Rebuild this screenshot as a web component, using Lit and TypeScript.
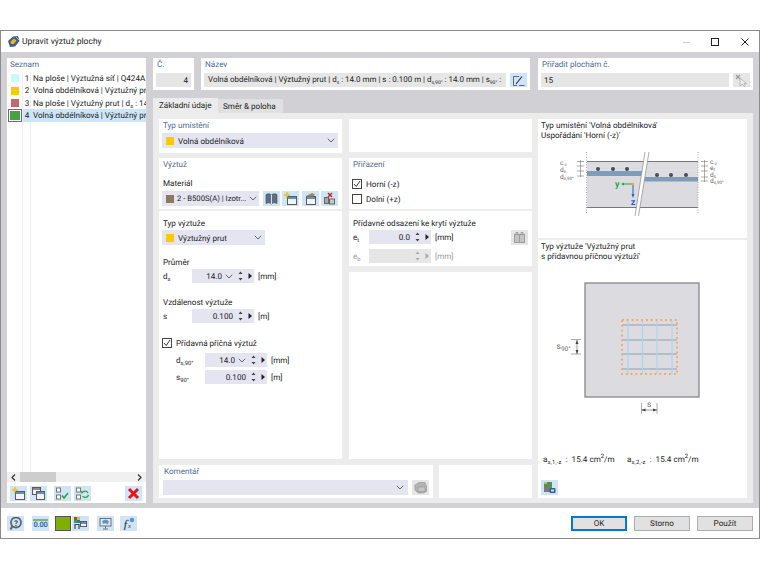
import { LitElement, html, css, svg } from "lit";
import { customElement } from "lit/decorators.js";

const chev = html`<svg class="chev" width="8" height="5" viewBox="0 0 8 5"><path d="M.8.8 4 4 7.2.8" fill="none" stroke="#666" stroke-width="1"/></svg>`;
const spin = html`<svg class="spin" width="5" height="10" viewBox="0 0 5 10"><path d="M2.5.5 4.5 3H.5zM2.5 9.5.5 7h4z" fill="#444"/></svg>`;
const tri = html`<svg class="tri" width="4" height="6" viewBox="0 0 4 6"><path d="M.5 0 4 3 .5 6z" fill="#222"/></svg>`;

const ic = (body: unknown) => html`<svg width="13" height="13" viewBox="0 0 13 13">${body}</svg>`;
const win = (x: number, y: number, w: number, h: number, top = "#5b93c9") => svg`<rect x="${x + .5}" y="${y + .5}" width="${w}" height="${h}" fill="#f4f4f4" stroke="#5a5a5a"/><rect x="${x + 1}" y="${y + 1}" width="${w - 1}" height="2" fill="${top}"/>`;
const star = svg`<path d="M3 0 3.8 2.2 6 3 3.8 3.8 3 6 2.2 3.8 0 3 2.2 2.2z" fill="#f5d000" stroke="#d8a800" stroke-width=".4"/>`;
const icons = {
  add: ic(svg`${win(3, 4, 9, 8)}${star}`),
  copy: ic(svg`${win(0, 0, 8, 7, "#8a8a8a")}${win(4, 4, 8, 8)}`),
  checks: ic(svg`<rect x=".5" y="1" width="4" height="4" fill="#fff" stroke="#777"/><rect x=".5" y="8" width="4" height="4" fill="#fff" stroke="#777"/><path d="M6 8.500 8 11 12 6" fill="none" stroke="#2da52d" stroke-width="1.600"/>`),
  swap: ic(svg`<rect x=".5" y="1" width="4" height="4" fill="#fff" stroke="#777"/><rect x=".5" y="8" width="4" height="4" fill="#fff" stroke="#777"/><path d="M6 6a3.4 3.4 0 0 1 6 0M12.5 8a3.4 3.4 0 0 1-6 1" fill="none" stroke="#2da52d" stroke-width="1.2"/><path d="M5 3.8 7.5 5 5.500 7z" fill="#2da52d"/>`),
  del: ic(svg`<path d="M2 2 11 11M11 2 2 11" stroke="#e5141a" stroke-width="3"/>`),
  book: ic(svg`<path d="M1 2.500C3 1.500 5 1.500 6.500 3 8 1.500 10 1.500 12 2.500V11.500C10 10.500 8 10.500 6.500 12 5 10.500 3 10.500 1 11.500z" fill="#5f6f80" stroke="#3f4a55" stroke-width=".6"/><path d="M6.500 3V12" stroke="#cfe5f7"/>`),
  edit: ic(svg`${win(2, 4, 9, 8)}<path d="M3 3.500 8 1l3 1.500-2 2H3z" fill="#a9825a"/>`),
  delMulti: ic(svg`<rect x="1.500" y="5.500" width="4" height="6" fill="#a8a8a8" stroke="#666"/><rect x="6.500" y="7" width="5" height="5" fill="#c8c8c8" stroke="#666"/><path d="M5 1 9 5M9 1 5 5" stroke="#e5141a" stroke-width="1.400"/>`),
  pen: ic(svg`<path d="M1.500 2.500H7M1.500 2.500V11.500H5" fill="none" stroke="#5b6a78"/><path d="M4 10 10 2.500" stroke="#334" stroke-width="1.200"/><path d="M7 11.500H12.500" stroke="#5b6a78"/>`),
  cursor: ic(svg`<path d="M1 1 5 5M5 1 1 5" stroke="#9a9a9a" stroke-width="1.200"/><path d="M5 4V12L7.200 10 9 12.500 10.300 11.700 9 9.500H11.500z" fill="#eee" stroke="#a5a5a5" stroke-width=".7"/>`),
  layers: ic(svg`<path d="M1 4 5 1.500H11L12.500 5V10.500L9 12H4L1 9z" fill="#b4b4b4" stroke="#9a9a9a" stroke-width=".7"/><path d="M4 6H11V10.500H4z" fill="#c6c6c6" stroke="#989898" stroke-width=".7"/>`),
  copy2: ic(svg`<rect x="1.500" y="3.500" width="5" height="8" fill="#c4c4c4" stroke="#9c9c9c"/><rect x="6.500" y="3.500" width="5" height="8" fill="#c4c4c4" stroke="#9c9c9c"/><path d="M3 3V1.500H5V3M8 3V1.500H10V3" fill="none" stroke="#9c9c9c"/>`),
  render: ic(svg`<rect x="1" y="1" width="8" height="6" fill="#5f8f50"/><rect x="1" y="1" width="3" height="2" fill="#b5c85a"/><rect x="1" y="6" width="7" height="5" fill="#7a7a7a"/><rect x="6.500" y="7" width="6" height="5" rx="1" fill="#2f5fa5"/><rect x="8" y="8.500" width="3" height="2" fill="#cfe5f7"/>`),
  help: ic(svg`<circle cx="7" cy="5.500" r="5" fill="none" stroke="#5d6670" stroke-width="1.800"/><path d="M3.500 9 1.500 12.500" stroke="#5d6670" stroke-width="2"/><text x="7" y="8.500" text-anchor="middle" font-size="8" font-weight="700" fill="#444c55">?</text>`),
  colors: ic(svg`<rect x="0" y="0" width="3" height="3" fill="#d8342c"/><rect x="3" y="0" width="3" height="3" fill="#f0c000"/><rect x="0" y="3" width="3" height="3" fill="#2fa540"/><rect x="3" y="3" width="3" height="3" fill="#2f6fc5"/><path d="M1 12V7.500H5V12" fill="none" stroke="#444" stroke-width="1.200"/>${win(6, 4, 6, 5)}`),
  monitor: ic(svg`<rect x="1" y="1.500" width="11" height="7.500" fill="#dfe5ea" stroke="#6a7480"/><path d="M3 4.500C5 2 8 2 10 4.500L8.500 7.500 6.500 6 4.500 7z" fill="#5f93c4"/><path d="M6.500 9V11.500M4 12H9" stroke="#6a7480"/>`),
  fx: ic(svg`<text x="1.500" y="11.500" font-size="13" font-style="italic" font-family="Liberation Serif" fill="#333">f</text><text x="6" y="10.500" font-size="6.500" font-style="italic" font-family="Liberation Serif" fill="#333">x</text><circle cx="10" cy="3" r="2.300" fill="#5f93c4"/>`),
  logo: html`<svg width="13" height="13" viewBox="0 0 13 13"><path d="M1 6 6 1.500 11 1 12.500 6 8 11.500 3 12z" fill="#3f5f85"/><path d="M3.500 6.500 7 3.500 9.500 5.500 7 9 4 9z" fill="#e8b820"/><path d="M9 2 12 5" stroke="#9fb8d0"/></svg>`,
};

const btn = (icon: unknown, extra = "") => html`<span class="ib ${extra}">${icon}</span>`;
const sw = (c: string) => html`<span class="sw" style="background:${c}"></span>`;
const ds = html`d<sub>s</sub>`;
const ds90 = html`d<sub>s,90°</sub>`;
const s90 = html`s<sub>90°</sub>`;

const num = (value: string, opts: { chev?: boolean; off?: boolean } = {}) => html`
  <span class="num ${opts.off ? "off" : ""}"><span class="val">${value}</span>${opts.chev ? chev : ""}${spin}${tri}</span>`;

const topDiagram = svg`
<svg class="dg" width="209" height="97" viewBox="538 141 209 97">
  <rect x="587" y="161" width="111" height="47" fill="#dcdce0"/>
  <path d="M587 161.500H698M587 207.500H698" stroke="#77777f" stroke-width="1.200"/>
  <path d="M587 166H640M587 170H640M646 166H698M646 170H698" stroke="#e8e8ea" stroke-width=".6"/>
  <rect x="587" y="171" width="56" height="5" fill="#7f9db8"/>
  <rect x="644" y="177" width="54" height="4.500" fill="#7f9db8"/>
  <path d="M645 152 635 216H638.500L649 152z" fill="#fff"/>
  <path d="M645 152 635 216M649 152 638.500 216" stroke="#8a8a90" stroke-width=".7"/>
  ${[598, 613, 627].map((x) => svg`<circle cx="${x}" cy="169" r="2" fill="#4a4a5a"/>`)}
  ${[657, 671, 686].map((x) => svg`<circle cx="${x}" cy="175" r="2" fill="#4a4a5a"/>`)}
  <path d="M586.500 152V213M698 152V213" stroke="#8a8a8a" stroke-width=".7" stroke-dasharray="1 1.500"/>
  <path d="M633 184H623" stroke="#1ea34a" stroke-width="1"/><path d="M621 184 624 182.500V185.500z" fill="#1ea34a"/>
  <path d="M633 184V195" stroke="#2a5fc5" stroke-width="1"/><path d="M633 198 631.500 194H634.500z" fill="#2a5fc5"/>
  <circle cx="633" cy="184" r="1.300" fill="#f0b400"/>
  <text x="615" y="187" class="ax" fill="#1ea34a">y</text>
  <text x="633" y="205" class="ax" fill="#2a5fc5" text-anchor="middle">z</text>
  <path d="M577 161.500H584M577 166H584M577 171H584M577 176H584M580.500 160V177" stroke="#777" stroke-width=".6"/>
  <path d="M701 161.500H708M701 166H708M701 171H708M701 177H708M701 181H708M704.500 160V182" stroke="#777" stroke-width=".6"/>
  <text x="560" y="165" class="dl">c<tspan dy="1" font-size="4.500">-z</tspan></text>
  <text x="560" y="172" class="dl">d<tspan dy="1" font-size="4.500">s</tspan></text>
  <text x="560" y="179" class="dl">d<tspan dy="1" font-size="4.500">s,90°</tspan></text>
  <text x="710" y="164" class="dl">c<tspan dy="1" font-size="4.500">-z</tspan></text>
  <text x="710" y="170" class="dl">e<tspan dy="1" font-size="4.500">t</tspan></text>
  <text x="710" y="176.500" class="dl">d<tspan dy="1" font-size="4.500">s</tspan></text>
  <text x="710" y="183" class="dl">d<tspan dy="1" font-size="4.500">s,90°</tspan></text>
</svg>`;

const bottomDiagram = svg`
<svg class="dg" width="209" height="153" viewBox="538 262 209 153">
  <rect x="585" y="283" width="114" height="114" fill="#dcdce0" stroke="#85858f" stroke-width="1.300"/>
  ${[325, 340, 354, 369].map((y) => svg`<path d="M622 ${y}H677" stroke="#8e9dae" stroke-width="1.200"/>`)}
  ${[628, 642.5, 657, 672].map((x) => svg`<path d="M${x} 321V374" stroke="#aed3f0" stroke-width="1.200"/>`)}
  <rect x="622" y="320" width="55" height="54" fill="none" stroke="#f0a868" stroke-width="1.800" stroke-dasharray="1.800 3"/>
  <path d="M571 339.500H581M571 354H581" stroke="#777" stroke-width=".6"/>
  <path d="M577 340V354" stroke="#555" stroke-width=".6"/>
  <path d="M577 340 575.500 344H578.500zM577 354 575.500 350H578.500z" fill="#444"/>
  <text x="556.500" y="349" class="sl">s<tspan dy="1.500" font-size="6.500">90°</tspan></text>
  <path d="M641.500 403V414M657 403V414" stroke="#777" stroke-width=".6"/>
  <path d="M641.500 410H657" stroke="#555" stroke-width=".6"/>
  <path d="M641.500 410 645.500 408.500V411.500zM657 410 653 408.500V411.500z" fill="#444"/>
  <text x="649.300" y="407" class="sl" text-anchor="middle">s</text>
</svg>`;

@customElement("app-root")
export class AppRoot extends LitElement {
  static styles = css`
    :host { display: block; width: 760px; height: 570px; background: #fff; overflow: hidden;
      font-family: Roboto, "Noto Sans", sans-serif; font-size: 8.1px; color: #222; line-height: 14px; text-rendering: geometricPrecision; }
    * { box-sizing: border-box; }
    sub { font-size: 5.8px; line-height: 0; vertical-align: -1.5px; }
    .window { margin-top: 30px; height: 509px; border: 1px solid #8c8c8c; display: flex; flex-direction: column; background: #fff; }
    .titlebar { height: 21px; display: flex; align-items: center; padding: 0 6px; gap: 2px; }
    .titlebar .t { flex: 1; font-size: 8.5px; }
    .wb { display: flex; align-items: center; }
    .wb svg { display: block; }
    .main { height: 456px; background: #d1d1d5; padding: 6px 6px 5px; display: flex; gap: 7px; }
    .left { width: 139px; background: #fff; display: flex; flex-direction: column; }
    .title { color: #4b6a9b; height: 14px; line-height: 13px; padding-left: 1px; flex: none; }
    .left .title { padding-left: 3px; }
    .list { flex: 1; overflow: hidden; padding-top: 0;
      background: linear-gradient(#eee,#eee) 15px 0/1px 100% no-repeat, linear-gradient(#eee,#eee) 23px 0/1px 100% no-repeat; }
    .row { height: 12.4px; line-height: 12.4px; display: flex; align-items: center; white-space: nowrap; overflow: hidden; }
    .row .sb { width: 16px; flex: none; display: flex; justify-content: center; padding-right: 1px; }
    .row .n { width: 8px; flex: none; text-align: center; }
    .row .tx { padding-left: 2px; flex: none; }
    .row.sel .n, .row.sel .tx { background: #cde6f7; height: 12.4px; }
    .row.sel .tx { flex: 1; }
    .row.sel .sb .sw { outline: 1px solid #fff; box-shadow: 0 0 0 2px #5b7080; width: 10px; height: 9px; }
    .sw { display: block; width: 8px; height: 8px; flex: none; }
    .hscroll { height: 10px; background: #f0f0f0; flex: none; display: flex; align-items: center; justify-content: space-between; padding: 0 4px; position: relative; }
    .thumb { width: 36px; height: 10px; background: #cdcdcd; margin-left: 4px; margin-right: auto; }
    .hscroll svg { display: block; }
    .ltools { height: 21px; flex: none; display: flex; padding: 4px 4px 2px 3px; }
    .ib { width: 17px; height: 15px; background: #cfe5f7; display: inline-flex; align-items: center; justify-content: center; flex: none; }
    .ib svg { display: block; }
    .ib.gray { background: #e6e6e6; }
    .ltools .ib + .ib { margin-left: 3px; }
    .ltools .ib.g { margin-left: 7px; }
    .ltools .ib.r { margin-left: auto; }
    .right { width: 600px; display: flex; flex-direction: column; }
    .head { display: flex; height: 32px; flex: none; }
    .card { background: #fff; padding: 0 3px; }
    .card .title { padding-left: 1px; }
    .head .c1 { width: 41px; }
    .head .c2 { width: 329px; margin-left: 7px; }
    .head .c3 { width: 215px; margin-left: 8px; }
    .fl { display: flex; gap: 4px; height: 14px; margin-top: 1px; }
    .fl .ib { height: 14px; }
    .field { flex: 1; background: #e6e6e6; padding: 0 3px; height: 14px; line-height: 14px; white-space: nowrap; overflow: hidden; min-width: 0; }
    .field.r { text-align: right; }
    .field.nm { font-size: 7.95px; padding-left: 4px; }
    .field.nm sub { font-size: 5px; }
    .tabs { height: 15px; margin-top: 8px; display: flex; flex: none; align-items: flex-end; }
    .tab { height: 14px; width: 65px; background: #e0e0e0; padding-left: 5px; line-height: 14px; }
    .tab.on { height: 15px; background: #ececec; padding-left: 6px; }
    .content { flex: 1; background: #ececec; padding: 6px 6px 5px; display: flex; gap: 6px; }
    .cols { width: 373px; display: flex; flex-direction: column; gap: 6px; }
    .tworow { flex: 1; display: flex; gap: 7px; }
    .col { width: 183px; display: flex; flex-direction: column; }
    .p { background: #fff; padding: 0 4px 0 3px; flex: none; }
    .sel2 { background: #e5e5f1; height: 15px; display: flex; align-items: center; padding: 0 3px 0 4px; gap: 4px; }
    .sel2 .lb { flex: 1; white-space: nowrap; overflow: hidden; }
    .sel2.mat { width: 97px; flex: none; gap: 3px; padding-right: 2px; }
    .sel2.mat .lb { font-size: 7.7px; }
    .lbl { height: 14px; line-height: 14px; padding-left: 1px; }
    .chev { flex: none; display: block; }
    .inr { display: flex; align-items: center; height: 14px; }
    .rl { width: 30px; padding-left: 1px; flex: none; }
    .num { width: 62px; height: 14px; background: #e5e5f1; display: flex; align-items: center; padding-right: 2px; flex: none; }
    .num .val { flex: 1; text-align: right; }
    .num .chev { margin-left: 3px; }
    .num .spin { margin-left: 5px; flex: none; }
    .num .tri { margin-left: 5px; flex: none; }
    .num.off { background: #e6e6e6; }
    .num.off svg path { fill: #aaa; }
    .unit { margin-left: 4px; }
    .chk { display: flex; align-items: center; height: 14px; gap: 4px; }
    .box { width: 10px; height: 10px; border: 1px solid #444; background: #fff; flex: none; }
    .box svg { display: block; }
    .off-t { color: #9a9a9a; }
    .cmt { display: flex; gap: 6px; height: 33px; flex: none; }
    .cmt .p1 { width: 274px; background: #fff; padding: 0 4px; }
    .cmt .p2 { width: 93px; background: #fff; }
    .pics { width: 209px; display: flex; flex-direction: column; gap: 2px; }
    .pic { background: #fff; display: flex; flex-direction: column; }
    .pic.a { height: 119px; flex: none; }
    .pic.b { flex: 1; }
    .cap { height: 22px; padding: 1px 0 0 3px; line-height: 10px; flex: none; }
    .dg { display: block; flex: none; }
    .dl { font-size: 6.500px; fill: #666; }
    .ax { font-size: 9px; font-weight: 600; }
    .sl { font-size: 8.500px; fill: #666; }
    .stats { margin-top: 38px; height: 12px; line-height: 12px; display: flex; padding-left: 5px; white-space: nowrap; flex: none; }
    .stats .s1 { width: 84px; }
    .stats sub { margin-right: 2px; letter-spacing: .2px; }
    .stats sup { font-size: 6px; line-height: 0; }
    .pbtn { margin: 15px 0 0 3px; flex: none; }
    .footer { flex: 1; display: flex; align-items: flex-start; padding: 8px 6px 0; }
    .ft { display: inline-flex; }
    .ft .ib { margin-right: 8px; }
    .ft .m0 { margin-right: 6px; }
    .green { width: 16px; height: 15px; background: #7fb000; border: 1px solid #555; margin-right: 1px; flex: none; }
    .fnum { font-size: 7.500px; font-weight: 600; color: #2c5fa0; line-height: 8px; border-top: 2px solid #7fb27f; letter-spacing: -.2px; }
    .sp { flex: 1; }
    .btn { width: 56px; height: 15px; background: #e1e1e1; border: 1px solid #adadad; text-align: center; line-height: 13px; margin-left: 7px; flex: none; }
    .btn.ok { border: 2px solid #0078d7; line-height: 11px; }
  `;

  render() {
    const rows = [
      ["#c8fbff", "1", html`Na ploše | Výztužná síť | Q424A`],
      ["#ffc800", "2", html`Volná obdélníková | Výztužný prut | ${ds} : 14.0 mm`],
      ["#c06a6e", "3", html`Na ploše | Výztužný prut | ${ds} : 14.0 mm | s : 0.100 m`],
      ["#4aa03c", "4", html`Volná obdélníková | Výztužný prut | ${ds} : 14.0 mm`],
    ] as const;
    return html`
      <div class="window">
        <div class="titlebar">
          ${icons.logo}<span class="t">Upravit výztuž plochy</span>
          <span class="wb">
            <svg width="78" height="12" viewBox="0 0 78 12">
              <path d="M8 6.500H15" stroke="#ccc"/>
              <rect x="36.500" y="2.500" width="7" height="7" fill="none" stroke="#222"/>
              <path d="M66.500 2.500 73.500 9.500M73.500 2.500 66.500 9.500" stroke="#222"/>
            </svg>
          </span>
        </div>
        <div class="main">
          <div class="left">
            <div class="title">Seznam</div>
            <div class="list">
              ${rows.map((r, i) => html`<div class="row ${i === 3 ? "sel" : ""}"><span class="sb">${sw(r[0])}</span><span class="n">${r[1]}</span><span class="tx">${r[2]}</span></div>`)}
            </div>
            <div class="hscroll">
              <svg width="5" height="7" viewBox="0 0 5 7"><path d="M4 .5 1 3.500 4 6.500" fill="none" stroke="#333" stroke-width="1.200"/></svg>
              <span class="thumb"></span>
              <svg width="5" height="7" viewBox="0 0 5 7"><path d="M1 .5 4 3.500 1 6.500" fill="none" stroke="#333" stroke-width="1.200"/></svg>
            </div>
            <div class="ltools">
              ${btn(icons.add)}${btn(icons.copy)}${btn(icons.checks, "g")}${btn(icons.swap)}${btn(icons.del, "r")}
            </div>
          </div>
          <div class="right">
            <div class="head">
              <div class="card c1"><div class="title">Č.</div><div class="fl"><div class="field r">4</div></div></div>
              <div class="card c2"><div class="title">Název</div>
                <div class="fl"><div class="field nm">Volná obdélníková | Výztužný prut | ${ds} : 14.0 mm | s : 0.100 m | ${ds90} : 14.0 mm | ${s90} :</div>${btn(icons.pen)}</div></div>
              <div class="card c3"><div class="title">Přiřadit plochám č.</div>
                <div class="fl"><div class="field">15</div>${btn(icons.cursor, "gray")}</div></div>
            </div>
            <div class="tabs"><div class="tab on">Základní údaje</div><div class="tab">Směr &amp; poloha</div></div>
            <div class="content">
              <div class="cols">
                <div class="tworow">
                  <div class="col">
                    <div class="p" style="height:34px">
                      <div class="title">Typ umístění</div>
                      <div class="sel2">${sw("#ffc800")}<span class="lb">Volná obdélníková</span>${chev}</div>
                    </div>
                    <div class="p" style="height:51px;margin-top:5px">
                      <div class="title">Výztuž</div>
                      <div class="lbl" style="margin-top:4px">Materiál</div>
                      <div style="display:flex;margin-top:1px">
                        <div class="sel2 mat">${sw("#8c7a5f")}<span class="lb">2 - B500S(A) | Izotr...</span>${chev}</div>
                        <span style="margin-left:4px">${btn(icons.book)}</span>
                        <span style="margin-left:2px">${btn(icons.add)}</span>
                        <span style="margin-left:3px">${btn(icons.edit)}</span>
                        <span style="margin-left:2px">${btn(icons.delMulti)}</span>
                      </div>
                    </div>
                    <div class="p" style="flex:1;margin-top:2px;padding-top:5px">
                      <div class="lbl">Typ výztuže</div>
                      <div class="sel2" style="width:103px">${sw("#ffc800")}<span class="lb">Výztužný prut</span>${chev}</div>
                      <div class="lbl" style="margin-top:10px">Průměr</div>
                      <div class="inr"><span class="rl">${ds}</span>${num("14.0", { chev: true })}<span class="unit">[mm]</span></div>
                      <div class="lbl" style="margin-top:12px">Vzdálenost výztuže</div>
                      <div class="inr"><span class="rl">s</span>${num("0.100")}<span class="unit">[m]</span></div>
                      <div class="chk" style="margin-top:13px">
                        <span class="box"><svg width="8" height="8" viewBox="0 0 8 8"><path d="M1 4 3.200 6.500 7 1" fill="none" stroke="#333" stroke-width="1"/></svg></span>Přídavná příčná výztuž
                      </div>
                      <div class="inr" style="margin-top:3px;padding-left:13px"><span class="rl">${ds90}</span>${num("14.0", { chev: true })}<span class="unit">[mm]</span></div>
                      <div class="inr" style="margin-top:3px;padding-left:13px"><span class="rl">${s90}</span>${num("0.100")}<span class="unit">[m]</span></div>
                    </div>
                  </div>
                  <div class="col">
                    <div class="p" style="height:33px"></div>
                    <div class="p" style="height:51px;margin-top:6px">
                      <div class="title">Přiřazení</div>
                      <div class="chk" style="margin-top:5px">
                        <span class="box"><svg width="8" height="8" viewBox="0 0 8 8"><path d="M1 4 3.200 6.500 7 1" fill="none" stroke="#333" stroke-width="1"/></svg></span>Horní (-z)
                      </div>
                      <div class="chk" style="margin-top:1px"><span class="box"></span>Dolní (+z)</div>
                    </div>
                    <div class="p" style="height:55px;margin-top:2px;padding-top:5px">
                      <div class="lbl">Přídavné odsazení ke krytí výztuže</div>
                      <div style="display:flex;justify-content:space-between">
                        <div class="inr"><span class="rl" style="width:17px">e<sub>t</sub></span>${num("0.0")}<span class="unit">[mm]</span></div>
                        ${btn(icons.copy2, "gray")}
                      </div>
                      <div class="inr off-t" style="margin-top:4px"><span class="rl" style="width:17px">e<sub>b</sub></span>${num("", { off: true })}<span class="unit">[mm]</span></div>
                    </div>
                    <div class="p" style="flex:1;margin-top:6px"></div>
                  </div>
                </div>
                <div class="cmt">
                  <div class="p1">
                    <div class="title">Komentář</div>
                    <div style="display:flex;gap:4px;margin-top:1px">
                      <div class="sel2" style="flex:1;justify-content:flex-end;padding-right:4px">${chev}</div>
                      ${btn(icons.layers, "gray")}
                    </div>
                  </div>
                  <div class="p2"></div>
                </div>
              </div>
              <div class="pics">
                <div class="pic a">
                  <div class="cap">Typ umístění 'Volná obdélníková'<br>Uspořádání 'Horní (-z)'</div>
                  ${topDiagram}
                </div>
                <div class="pic b">
                  <div class="cap">Typ výztuže 'Výztužný prut<br>s přídavnou příčnou výztuží'</div>
                  ${bottomDiagram}
                  <div class="stats">
                    <span class="s1">a<sub>s,1,-z</sub> :&nbsp; 15.4 cm<sup>2</sup>/m</span>
                    <span>a<sub>s,2,-z</sub> :&nbsp; 15.4 cm<sup>2</sup>/m</span>
                  </div>
                  <div class="pbtn">${btn(icons.render)}</div>
                </div>
              </div>
            </div>
          </div>
        </div>
        <div class="footer">
          <div class="ft">
            ${btn(icons.help)}
            ${btn(html`<span class="fnum">0.00</span>`, "m0")}
            <span class="green"></span>
            ${btn(icons.colors)}
            ${btn(icons.monitor, "m0")}
            ${btn(icons.fx)}
          </div>
          <span class="sp"></span>
          <div class="btn ok">OK</div>
          <div class="btn">Storno</div>
          <div class="btn">Použít</div>
        </div>
      </div>
    `;
  }
}
